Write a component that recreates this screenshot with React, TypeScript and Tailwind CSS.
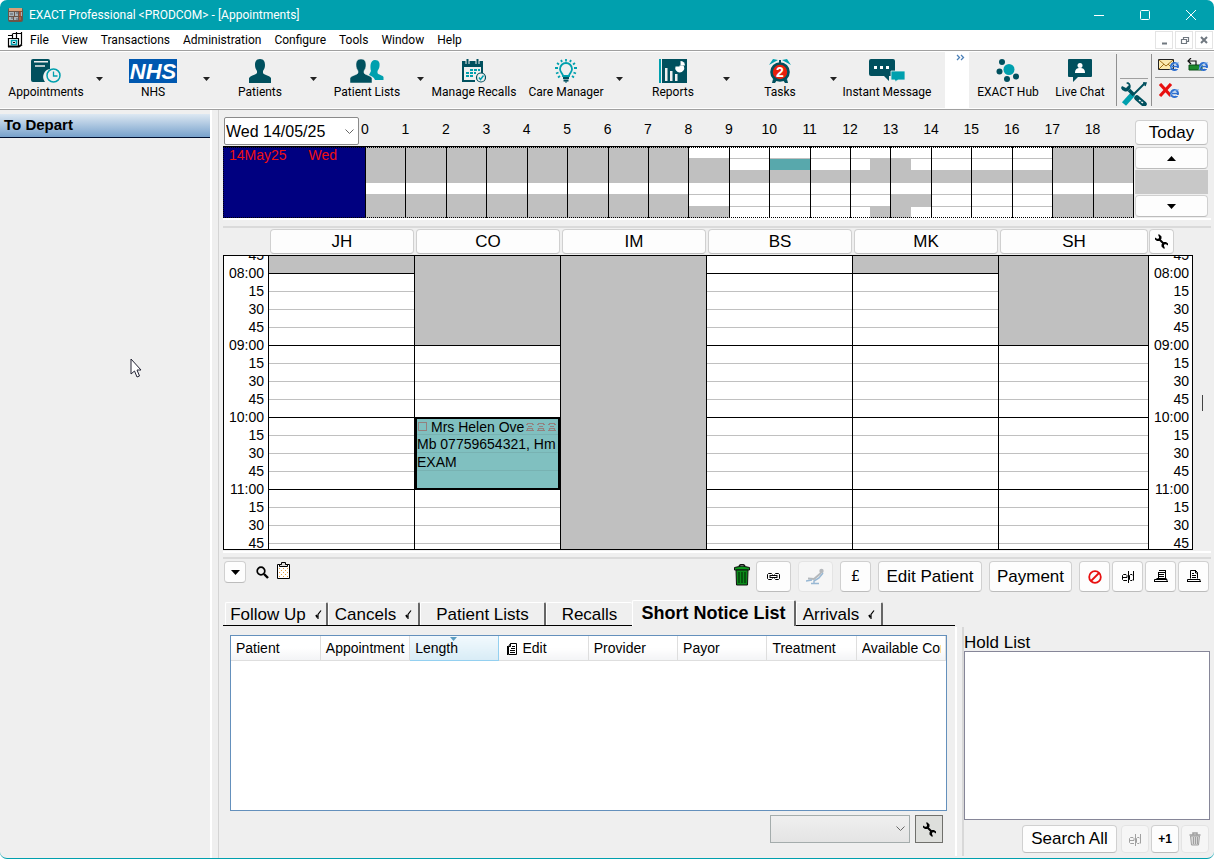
import React from "react";

const ui = "font-['Roboto','Open_Sans',sans-serif]";

const menus = ["File", "View", "Transactions", "Administration", "Configure", "Tools", "Window", "Help"];

type Seg = [number, string];

const G = "bg-[#c0c0c0]";
const W = "bg-white";
const T = "bg-[#58a8ac]";

const overview: Seg[][] = [
  [[8, G], [9, W], [2, G]],
  [[9, G], [1, W], [1, T], [1.5, W], [1, G], [3.5, W], [2, G]],
  [[19, G]],
  [[19, W]],
  [[8, G], [5, W], [1, G], [3, W], [2, G]],
  [[9, G], [3.5, W], [1, G], [3.5, W], [2, G]],
];

const hours = Array.from({ length: 19 }, (_, i) => i);

// closed = number of leading quarter-hour slots, from 07:45, with no surgery
const providers = [
  { name: "JH", closed: 1 },
  { name: "CO", closed: 5 },
  { name: "IM", closed: 99 },
  { name: "BS", closed: 0 },
  { name: "MK", closed: 1 },
  { name: "SH", closed: 5 },
];

const slots = Array.from({ length: 17 }, (_, i) => i);

function slotLabel(i: number) {
  const minutes = 7 * 60 + 45 + i * 15;
  const m = minutes % 60;
  const h = Math.floor(minutes / 60);
  return m === 0 ? `${String(h).padStart(2, "0")}:00` : String(m);
}

function AppIcon() {
  return (
    <svg width="15" height="16" viewBox="0 0 15 16" aria-hidden="true">
      <rect x="0" y="1" width="15" height="14" rx="2" fill="#6b5548" />
      <rect x="1" y="1" width="13" height="3" fill="#d9a078" />
      <path d="M1 5h5v4H1zM7 5h3v4H7zM11 5h3v4h-3zM1 10h4v3H1zM6 10h4v3H6zM11 10h2v3h-2z" fill="#a9b4ba" />
      <path d="M2 7h3M8 6h4M3 11h2M8 12h3" stroke="#5c5f66" />
      <path d="M12 4v10" stroke="#a8401c" strokeWidth="1.500" />
    </svg>
  );
}

function DocIcon() {
  return (
    <svg width="16" height="16" viewBox="0 0 16 16" fill="none" stroke="#000" strokeWidth="1.200" aria-hidden="true">
      <path d="M5.500 6V1.500M14.500 0v12M1 3.500h5M9.500 0v6M1.500 6.500v8h10v-8z" />
      <path d="M1 14.500h11l3-2" strokeWidth="1.800" />
      <path d="M4.500 8.500h5v4h-5z" stroke="#00a0ae" strokeWidth="1.600" />
      <path d="M6 10.500h2M6 1.500h8" />
    </svg>
  );
}

function AppointmentsIcon() {
  return (
    <svg width="30" height="24" viewBox="0 0 30 24" aria-hidden="true">
      <path d="M2 0h15q2 0 2 2v8a8 8 0 0 0-5 13H2q-2 0-2-2V2Q0 0 2 0z" fill="#00505e" />
      <path d="M3 2h14v1.500H3z" fill="#efefef" />
      <path d="M4 7h10" stroke="#efefef" strokeWidth="1.500" />
      <circle cx="22.500" cy="16.500" r="6.500" fill="#efefef" stroke="#00a0ae" strokeWidth="1.500" />
      <path d="M22.500 12.500v4.500h4" fill="none" stroke="#00a0ae" strokeWidth="1.300" />
    </svg>
  );
}

const person = "M11 0c4 0 5 3 5 6 0 3-1 4-2 6v2c1 2 6 2 8 5v5H0v-5c2-3 7-3 8-5v-2C7 10 6 9 6 6c0-3 1-6 5-6z";

function PatientIcon() {
  return (
    <svg width="22" height="24" viewBox="0 0 22 24" aria-hidden="true">
      <path d={person} fill="#00505e" />
    </svg>
  );
}

function PatientListsIcon() {
  return (
    <svg width="34" height="24" viewBox="0 0 34 24" aria-hidden="true">
      <path d="M25 1c4 0 5 3 4.500 6 0 2-1 3-2 5v2c1 2 5 2 6 4v3H25c-1-3-4-4-6-5l2-4c-1-4-1-11 4-11z" fill="#00a0ae" />
      <path d={person} fill="#00505e" stroke="#efefef" strokeWidth="0.500" />
    </svg>
  );
}

function RecallsIcon() {
  return (
    <svg width="24" height="24" viewBox="0 0 24 24" aria-hidden="true">
      <path d="M0 2h21v12h-2V8H2v13h11v2H0z" fill="#00505e" />
      <path d="M5.500 0v5M15.500 0v5" stroke="#efefef" strokeWidth="4" />
      <path d="M5.500 0v5M15.500 0v5" stroke="#00505e" strokeWidth="2" />
      <path d="M8 10h3v2H8zM12 10h3v2h-3zM16 10h2v2h-2zM4 13h3v2H4zM8 13h3v2H8zM12 13h2v2h-2zM4 16h3v2H4zM8 16h3v2H8z" fill="#00a0ae" />
      <circle cx="19" cy="18.500" r="4.500" fill="#efefef" stroke="#00505e" strokeWidth="1.200" />
      <path d="M17 18.500l1.500 2 3-4" fill="none" stroke="#00a0ae" strokeWidth="1.500" />
    </svg>
  );
}

function CareIcon() {
  return (
    <svg width="22" height="24" viewBox="0 0 22 24" fill="none" aria-hidden="true">
      <path d="M8 17c0-3-3-3-3-7a6 6 0 0 1 12 0c0 4-3 4-3 7z" stroke="#00a0ae" strokeWidth="1.800" />
      <path d="M11 0v2.500M6 1l1 2M16 1l-1 2M2 4l2 1.500M20 4l-2 1.500M0 9h3M19 9h3M1 14.500l2.500-1M21 14.500l-2.500-1M3 18.500l2-1.500M19 18.500l-2-1.500" stroke="#00a0ae" strokeWidth="1.800" />
      <path d="M8 19h6M8.500 21.500h5" stroke="#00505e" strokeWidth="1.800" />
      <path d="M9.500 22.500h3L11 24z" fill="#00505e" />
    </svg>
  );
}

function ReportsIcon() {
  return (
    <svg width="28" height="24" viewBox="0 0 28 24" aria-hidden="true">
      <path d="M0 0h2v24H0z" fill="#00a0ae" />
      <path d="M3 0h25v24H3z" fill="#00505e" />
      <path d="M6 9h2.500v13H6zM11 12h2.500v10H11zM16 15h2.500v7H16z" fill="#efefef" />
      <path d="M20.500 3v4.500H16.500a4.500 4.500 0 1 0 8.500 0l-1-1h-3.500z" fill="#fff" />
      <path d="M21.500 2v4.500h4.500a4.500 4.500 0 0 0-4.500-4.500z" fill="#fff" />
    </svg>
  );
}

function TasksIcon() {
  return (
    <svg width="24" height="24" viewBox="0 0 24 24" aria-hidden="true">
      <path d="M1 6l4-6 5 1zM23 6l-4-6-5 1z" fill="#00a0ae" />
      <path d="M11 1h2v3h-2z" fill="#00505e" />
      <path d="M5 20l-1 4h3l2-3zM19 20l1 4h-3l-2-3z" fill="#00505e" />
      <circle cx="12" cy="13" r="8.500" fill="#e8200c" stroke="#00505e" strokeWidth="2.600" />
      <text x="12" y="18" textAnchor="middle" fontFamily="Liberation Sans" fontWeight="bold" fontSize="14" fill="#fff">2</text>
    </svg>
  );
}

function MessageIcon() {
  return (
    <svg width="36" height="23" viewBox="0 0 36 23" aria-hidden="true">
      <path d="M2 0h22q2 0 2 2v13q0 2-2 2h-4v5l-5-5H2q-2 0-2-2V2Q0 0 2 0z" fill="#00505e" />
      <path d="M5 7h3v3H5zM11 7h3v3h-3zM17 7h3v3h-3z" fill="#fff" />
      <path d="M22 12h14v9h-7l-3 2v-2h-4z" fill="#00a0ae" stroke="#efefef" strokeWidth="0.800" />
    </svg>
  );
}

function HubIcon() {
  return (
    <svg width="24" height="24" viewBox="0 0 24 24" fill="#00505e" aria-hidden="true">
      <circle cx="13" cy="10.500" r="5.500" fill="#00a0ae" />
      <circle cx="6" cy="3" r="3" />
      <circle cx="3.500" cy="12.500" r="3" />
      <circle cx="11" cy="20" r="3" />
      <circle cx="20" cy="17.500" r="3" />
    </svg>
  );
}

function ChatIcon() {
  return (
    <svg width="24" height="23" viewBox="0 0 24 23" aria-hidden="true">
      <path d="M1 0h22q1 0 1 1v16q0 1-1 1H10l-5 5v-5H1q-1 0-1-1V1q0-1 1-1z" fill="#00505e" />
      <circle cx="12" cy="6.500" r="2.500" fill="#fff" />
      <path d="M7 14c0-4 2-5 5-5s5 1 5 5z" fill="#fff" />
    </svg>
  );
}

function ToolsIcon() {
  return (
    <svg width="26" height="24" viewBox="0 0 26 24" fill="none" aria-hidden="true">
      <path d="M24 1L12 13" stroke="#00505e" strokeWidth="2" />
      <path d="M22 1h3l-1 3" stroke="#00505e" strokeWidth="1.500" />
      <path d="M12 12L3 22" stroke="#00a0ae" strokeWidth="5.500" />
      <path d="M8 8l5 5" stroke="#00505e" strokeWidth="3.500" />
      <path d="M16 16l7 6" stroke="#00505e" strokeWidth="5.500" strokeLinecap="round" />
      <path d="M18 18l4 3" stroke="#efefef" strokeWidth="1.500" strokeDasharray="2 1" />
      <path d="M7 0a5 5 0 1 1-7 6l1-2 4 2 3-3-3-2z" fill="#00505e" />
    </svg>
  );
}

function IeMark({ x, y }: { x: number; y: number }) {
  return (
    <g transform={`translate(${x} ${y})`} fill="none">
      <circle cx="4.500" cy="4.500" r="3.500" stroke="#2f6fd0" strokeWidth="2" />
      <path d="M1.500 4.500h7" stroke="#2f6fd0" strokeWidth="1.500" />
      <path d="M6 6.500h4" stroke="#efefef" />
      <path d="M0 8C1 3 6 0 9 1" stroke="#7fb4ee" />
    </g>
  );
}

function MailIcon() {
  return (
    <svg width="22" height="14" viewBox="0 0 22 14" aria-hidden="true">
      <path d="M.500 1.500h15v10H.500z" fill="#fbeab0" stroke="#222" />
      <path d="M1 2l7 6 7-6M1 11l5-5M15 11l-5-5" fill="none" stroke="#a07018" />
      <IeMark x={12} y={4} />
    </svg>
  );
}

function SyncIcon() {
  return (
    <svg width="22" height="14" viewBox="0 0 22 14" aria-hidden="true">
      <path d="M2 7h13v5H2z" fill="#1d8a2c" stroke="#0c4f18" />
      <path d="M4 0L1 3l3 3M1 3h8v4" fill="none" stroke="#111" strokeWidth="1.200" />
      <IeMark x={12} y={4} />
    </svg>
  );
}

function CancelIcon() {
  return (
    <svg width="22" height="16" viewBox="0 0 22 16" aria-hidden="true">
      <path d="M2 1l11 12M13 1L2 13" stroke="#e81010" strokeWidth="3.200" />
      <IeMark x={12} y={6} />
    </svg>
  );
}

function WrenchIcon() {
  return (
    <svg width="15" height="15" viewBox="0 0 15 15" aria-hidden="true">
      <path d="M5 5l5 5" stroke="#000" strokeWidth="2" />
      <path d="M4 0.500h1.500l2 2v2l-1 1.500-1.500 1H3L1 5.500V3.500l2 1.200h1.200l.800-.800V3z" />
      <path d="M11 14.500H9.500l-2-2v-2l1-1.500 1.500-1h2l2 1.500v2l-2-1.200h-1.200l-.800.800V12z" />
    </svg>
  );
}

function TrashIcon({ muted = false }: { muted?: boolean }) {
  if (muted) {
    return (
      <svg width="12" height="14" viewBox="0 0 12 14" fill="none" stroke="#a0a0a0" aria-hidden="true">
        <path d="M.500 3h11M4 3V1h4v2" strokeWidth="1.500" />
        <path d="M1.500 4l1 9h7l1-9z" fill="#d8d8d8" />
        <path d="M4.500 5v7M6.500 5v7M8.500 5v7" />
      </svg>
    );
  }
  return (
    <svg width="16" height="22" viewBox="0 0 16 22" aria-hidden="true">
      <path d="M5 2q3-3 6 0" fill="none" stroke="#111" strokeWidth="1.500" />
      <path d="M.500 3.500q7.500-3 15 0V6H.500z" fill="#0a9a1c" stroke="#111" />
      <path d="M2 6h12l-.500 15h-11z" fill="#0a8a1a" stroke="#111" />
      <path d="M5 8v11M8 8v11M11 8v11" stroke="#033d0a" strokeWidth="1.400" />
    </svg>
  );
}

function LinkIcon() {
  return (
    <svg width="13" height="8" viewBox="0 0 13 8" fill="none" stroke="#000" aria-hidden="true">
      <path d="M5.500 1.500l-1-1h-3l-1 1v4l1 1h3l1-1M7.500 1.500l1-1h3l1 1v4l-1 1h-3l-1-1M3 2.500h7M3 4.500h7M3 2v3M10 2v3" />
    </svg>
  );
}

function ChairIcon() {
  return (
    <svg width="20" height="17" viewBox="0 0 20 17" fill="none" aria-hidden="true">
      <path d="M2 10.500l6 .500 7-6" stroke="#b4b8bc" strokeWidth="2" />
      <circle cx="15.500" cy="3" r="2.200" fill="#b4b8bc" />
      <path d="M17 5l-4 5-5 3v2M0 13l6-1M5 15.500h8" stroke="#98b8d4" strokeWidth="1.500" />
    </svg>
  );
}

function BlockIcon() {
  return (
    <svg width="14" height="14" viewBox="0 0 14 14" fill="none" stroke="#e81010" strokeWidth="1.800" aria-hidden="true">
      <circle cx="7" cy="7" r="5.800" />
      <path d="M11 3l-8 8" />
    </svg>
  );
}

function EditMark({ muted = false }: { muted?: boolean }) {
  return (
    <svg width="12" height="13" viewBox="0 0 12 13" fill="none" stroke={muted ? "#a0a0a0" : "#000"} aria-hidden="true">
      <path d="M.500 7.500h4.500v-2l-1-1H1.500l-1 1v4l1 1H5M6.500 1v12M11.500 1v9.500M11 5.500l-1-1H8.500l-1 1v4l1 1H10l1-1" />
    </svg>
  );
}

function PrintIcon({ stacked = false }: { stacked?: boolean }) {
  return (
    <svg width="14" height="13" viewBox="0 0 14 13" fill="none" stroke="#000" aria-hidden="true">
      {stacked ? (
        <path d="M5 .500h7M4 2.500h7.500M11.500 1v7M4.500 3v5M2.500 8.500h10M5 4.500h5M5 6.500h5" />
      ) : (
        <path d="M3.500 8.500v-8h5l2 2v6M8.500 0v3h2M5 3.500h2M5 5.500h4M5 7.500h4" />
      )}
      <path d="M.500 12V9.500h3M10 9.500h3V12M3 9.500h8" />
      <path d="M0 11.500h14" />
    </svg>
  );
}

function SearchIcon() {
  return (
    <svg width="13" height="13" viewBox="0 0 13 13" fill="none" stroke="#000" aria-hidden="true">
      <circle cx="5" cy="5" r="3.800" strokeWidth="1.700" />
      <path d="M8 8l4 4" strokeWidth="2.400" />
    </svg>
  );
}

function ClipboardIcon() {
  return (
    <svg width="13" height="19" viewBox="0 0 13 19" fill="none" aria-hidden="true">
      <path d="M.500 3.500h12v14H.500z" fill="#fff" stroke="#000" />
      <path d="M2 7.500h1M6 7.500h1M10 7.500h1M4 9.500h1M8 9.500h1M2 11.500h1M6 11.500h1M10 11.500h1M4 13.500h1M8 13.500h1M2 15.500h1M6 15.500h1M10 15.500h1" stroke="#e8a040" />
      <path d="M2.500 5.500v-2h2v-2h4v2h2v2z" fill="#ddd" stroke="#000" />
    </svg>
  );
}

function Triangle({ up = false }: { up?: boolean }) {
  return (
    <svg width="9" height="5" viewBox="0 0 9 5" aria-hidden="true">
      <path d={up ? "M0 5h9L4.500 0z" : "M0 0h9L4.500 5z"} />
    </svg>
  );
}

function Chevron() {
  return (
    <svg width="9" height="6" viewBox="0 0 9 6" fill="none" stroke="#666" aria-hidden="true">
      <path d="M.500.500l4 4 4-4" />
    </svg>
  );
}

function PhoneIcon() {
  return (
    <svg width="8" height="8" viewBox="0 0 8 8" fill="none" stroke="#94807e" aria-hidden="true">
      <path d="M0 1.500h2M6 1.500h2M1 .500h6M2 3.500h4M1 5.500h6M0 7.500h8M1.500 5v3M6.500 5v3" strokeWidth="1.200" />
    </svg>
  );
}

function CheckMark() {
  return (
    <svg width="7" height="10" viewBox="0 0 7 10" fill="none" stroke="#000" aria-hidden="true">
      <path d="M1 5l1.500 2.500" strokeWidth="1.800" />
      <path d="M3 9V4.500L6 .500" strokeWidth="1.200" />
    </svg>
  );
}

function Handle() {
  return (
    <svg width="7" height="4" viewBox="0 0 7 4" fill="#222" aria-hidden="true">
      <path d="M0 0h7L3.500 4z" />
    </svg>
  );
}

function Tool({ label, arrow = false, children, width = "w-[92px]" }: { label: string; arrow?: boolean; children: React.ReactNode; width?: string }) {
  return (
    <div className="flex shrink-0">
      <button type="button" className={`${width} flex flex-col items-center pt-[7px]`}>
        <span className="flex h-6 items-start">{children}</span>
        <span className="whitespace-nowrap text-[12px] leading-[18px]">{label}</span>
      </button>
      {arrow && (
        <button type="button" aria-label={`${label} menu`} className="flex w-[15px] justify-center pt-[25px]">
          <Handle />
        </button>
      )}
    </div>
  );
}

function Btn({ children, className = "", label, disabled = false }: { children: React.ReactNode; className?: string; label?: string; disabled?: boolean }) {
  return (
    <button
      type="button"
      aria-label={label}
      disabled={disabled}
      className={`flex shrink-0 items-center justify-center whitespace-nowrap rounded-[4px] border ${disabled ? "border-[#e4e4e4] bg-[#f6f6f6]" : "border-[#d0d0d0] border-b-[#bcbcbc] bg-[#fdfdfd]"} ${className}`}
    >
      {children}
    </button>
  );
}

function TimeColumn({ className }: { className: string }) {
  return (
    <div className={`w-[44px] shrink-0 overflow-hidden bg-white text-right text-[14px] ${className}`}>
      <div className="-mt-[10px]">
        {slots.map((i) => (
          <div key={i} className="h-[18px] leading-[18px]">{slotLabel(i)}</div>
        ))}
      </div>
    </div>
  );
}

function ProviderColumn({ closed, children }: { closed: number; children?: React.ReactNode }) {
  return (
    <div className="relative flex min-w-0 flex-col border-l border-black bg-white">
      {slots.map((i) => {
        const last = i === closed - 1 || i % 4 === 0;
        const tone = i < closed ? "bg-[#c0c0c0]" : "bg-white";
        const line = i < closed - 1 ? "border-[#c0c0c0]" : last ? "border-black" : "border-[#c0c0c0]";
        const size = i === slots.length - 1 ? "flex-1" : "h-[18px] shrink-0 border-b";
        return <div key={i} className={`${size} ${tone} ${line}`} />;
      })}
      {children}
    </div>
  );
}

function AppointmentCard() {
  return (
    <div className="absolute inset-x-0 top-[161px] h-[73px] overflow-hidden border-2 border-black bg-[#80c0c0] text-[14px] leading-[18px]">
      <div className="flex h-4 items-center border-b border-[#78b2b2] leading-4">
        <input type="checkbox" aria-label="Arrived" className="ml-px mr-1 size-[9px] shrink-0 appearance-none border border-[#94807e]" />
        <span className="flex-1 whitespace-nowrap">Mrs Helen Ove</span>
        <span className="flex shrink-0 gap-[3px] pr-[2px]">
          <PhoneIcon />
          <PhoneIcon />
          <PhoneIcon />
        </span>
      </div>
      <div className="h-[18px] whitespace-nowrap border-b border-[#78b2b2]">Mb 07759654321, Hm</div>
      <div className="h-[18px] border-b border-[#78b2b2]">EXAM</div>
    </div>
  );
}

function Tab({ label, checked = false, className }: { label: string; checked?: boolean; className: string }) {
  return (
    <button
      type="button"
      role="tab"
      aria-selected="false"
      className={`flex h-[23px] shrink-0 items-center justify-center gap-[9px] whitespace-nowrap rounded-t-[2px] border-l border-t border-l-white border-t-white border-r-[#666] pt-px text-[17px] leading-5 ${className}`}
    >
      {label}
      {checked && <CheckMark />}
    </button>
  );
}

const columns = ["Patient", "Appointment", "Length", "Edit", "Provider", "Payor", "Treatment", "Available Con"];

export default function App() {
  return (
    <div className="flex h-screen min-h-[700px] flex-col overflow-hidden rounded-[7px] border-b border-[#00a0ae] bg-[#efefef] font-['Liberation_Sans',sans-serif] text-black">
      <header className={`flex h-[30px] shrink-0 items-center bg-[#00a0ae] pl-2 text-[12px] text-white ${ui}`}>
        <AppIcon />
        <h1 className="ml-[6px]">EXACT Professional &lt;PRODCOM&gt; - [Appointments]</h1>
        <div className="ml-auto flex">
          <button type="button" aria-label="Minimise" className="flex w-[46px] items-center justify-center">
            <svg width="10" height="10" stroke="white"><path d="M0 5.500h10" /></svg>
          </button>
          <button type="button" aria-label="Maximise" className="flex w-[46px] items-center justify-center">
            <svg width="10" height="10" stroke="white" fill="none"><rect x=".5" y=".5" width="9" height="9" rx="1" /></svg>
          </button>
          <button type="button" aria-label="Close" className="flex w-[46px] items-center justify-center">
            <svg width="10" height="10" stroke="white"><path d="M0 0l10 10M10 0L0 10" /></svg>
          </button>
        </div>
      </header>

      <nav className={`flex h-5 shrink-0 items-center bg-white pl-[7px] text-[12px] ${ui}`}>
        <DocIcon />
        <div className="ml-[7px] flex gap-[13px]">
          {menus.map((m) => (
            <button type="button" key={m}>{m}</button>
          ))}
        </div>
        <div className="ml-auto flex gap-[2px] pr-px">
          {["M4 9.500h5", "M5.500 5.500V3.500h5v4h-2M3.500 5.500h5v4h-5z", "M3 3l6 6M9 3l-6 6"].map((d, i) => (
            <button type="button" key={d} aria-label={["Minimise window", "Restore window", "Close window"][i]} className="flex size-[18px] items-center justify-center border border-[#e4e4e4]">
              <svg width="13" height="13" fill="none" stroke="#707880" strokeWidth={i === 1 ? 1.2 : 2}><path d={d} /></svg>
            </button>
          ))}
        </div>
      </nav>

      <div className={`flex h-[60px] shrink-0 border-y border-[#a0a0a0] ${ui}`}>
        <div className="flex w-full border-y border-white">
          <Tool label="Appointments" arrow><AppointmentsIcon /></Tool>
          <Tool label="NHS" arrow>
            <span className="flex h-6 w-12 items-center justify-center bg-[#0058b0] font-['Liberation_Sans',sans-serif] text-[22px] font-bold italic text-white">NHS</span>
          </Tool>
          <Tool label="Patients" arrow><PatientIcon /></Tool>
          <Tool label="Patient Lists" arrow><PatientListsIcon /></Tool>
          <Tool label="Manage Recalls"><RecallsIcon /></Tool>
          <Tool label="Care Manager" arrow><CareIcon /></Tool>
          <Tool label="Reports" arrow><ReportsIcon /></Tool>
          <Tool label="Tasks" arrow><TasksIcon /></Tool>
          <Tool label="Instant Message"><MessageIcon /></Tool>
          <div className="ml-auto flex shrink-0">
            <button type="button" aria-label="More tools" className="mr-[3px] flex w-6 justify-center bg-white pt-[2px]">
              <svg width="9" height="7" fill="none" stroke="#4c80b8" strokeWidth="1.300" className="ml-[7px]"><path d="M1 1l2.500 2.500L1 6M5 1l2.500 2.500L5 6" /></svg>
            </button>
            <Tool label="EXACT Hub" width="w-[72px]"><HubIcon /></Tool>
            <Tool label="Live Chat" width="w-[72px]"><ChatIcon /></Tool>
            <div className="my-[2px] w-[36px] border-x border-[#909090] px-[3px]">
              <div className="h-[25px] border-b border-[#a0a0a0]" />
              <button type="button" aria-label="Tools" className="flex h-[27px] w-full items-end justify-center"><ToolsIcon /></button>
            </div>
            <div className="w-[62px] pl-[3px]">
              <div className="flex h-[26px] items-center justify-center gap-[7px] border-b border-[#a0a0a0] pr-[2px]">
                <button type="button" aria-label="Send mail"><MailIcon /></button>
                <button type="button" aria-label="Synchronise"><SyncIcon /></button>
              </div>
              <button type="button" aria-label="Stop" className="ml-[3px] mt-[5px]"><CancelIcon /></button>
            </div>
          </div>
        </div>
      </div>

      <div className="flex min-h-0 flex-1">
        <aside className="relative w-[212px] shrink-0 border-r-2 border-white pt-1">
          <h2 className="h-6 border-b border-[#001030] bg-linear-to-b from-[#dde8f2] to-[#78a2cc] pl-1 text-[15px] font-bold leading-[21px]">To Depart</h2>
          <svg width="12" height="20" viewBox="0 0 12 20" className="absolute left-[130px] top-[248px]" aria-hidden="true">
            <path d="M1 1v15l3.500-3 2.500 6 2.500-1-2.500-6H11z" fill="#fff" stroke="#223" />
          </svg>
        </aside>

        <main className="ml-[6px] flex min-w-0 flex-1 flex-col border-l border-[#d4d4d4]">
          <section className="flex shrink-0 pl-1 pr-[6px] pt-[7px]">
            <div className="min-w-0 flex-1">
              <div className="flex h-[29px]">
                <div className="relative w-[142px] shrink-0 pl-px">
                  <select aria-label="Date" className="h-7 w-[135px] appearance-none rounded-[2px] border border-[#8a8a8a] bg-white pl-px pt-px text-[16px]">
                    <option>Wed 14/05/25</option>
                  </select>
                  <span className="pointer-events-none absolute right-[11px] top-[12px]"><Chevron /></span>
                </div>
                <div className="mr-px flex flex-1">
                  {hours.map((h) => (
                    <div key={h} className="flex-1">
                      <span className="flex w-0 justify-center pt-1 text-[14px] leading-4">{h}</span>
                    </div>
                  ))}
                </div>
              </div>
              <div className="relative flex h-[72px] border-t border-black">
                <div className="w-[142px] shrink-0 bg-[#000080] pl-[6px] text-[14px] leading-[17px] text-[#f01010]">
                  <span className="mr-[22px]">14May25</span>
                  <span>Wed</span>
                </div>
                <div className="relative flex-1 border-r border-black">
                  {overview.map((row, r) => (
                    <div key={r} className={`flex border-[#c0c0c0] bg-[#c0c0c0] ${r === 5 ? "h-[11px]" : "h-3 border-b"}`}>
                      {row.map(([n, tone], s) => (
                        <div key={s} className={`basis-0 ${tone}`} style={{ flexGrow: n }} />
                      ))}
                    </div>
                  ))}
                  <div className="absolute inset-0 flex">
                    {hours.map((h) => (
                      <div key={h} className="flex-1 border-l border-black" />
                    ))}
                  </div>
                </div>
                <div className="pointer-events-none absolute inset-0 border border-dotted border-black" />
              </div>
            </div>
            <div className="ml-px flex w-[73px] shrink-0 flex-col pt-[3px] text-[17px]">
              <Btn className="h-[25px] w-full">Today</Btn>
              <Btn label="Previous week" className="mt-[2px] h-[22px] w-full"><Triangle up /></Btn>
              <div className="my-px h-6 bg-[#c8c8c8]" />
              <Btn label="Next week" className="h-[22px] w-full"><Triangle /></Btn>
            </div>
          </section>

          <div className="ml-1 mr-[3px] h-[10px] shrink-0 border-y-2 border-b-[#dadada] border-t-white" />

          <section className="relative flex min-h-0 flex-1 flex-col pl-1 pr-[21px] pt-px">
            <div className="flex h-[26px] shrink-0 pl-[46px]">
              <div className="grid flex-1 grid-cols-[repeat(5,146fr)_150fr]">
                {providers.map((p) => (
                  <div key={p.name} className="px-px">
                    <Btn className="h-[25px] w-full text-[17px]">{p.name}</Btn>
                  </div>
                ))}
              </div>
              <div className="w-[44px] shrink-0">
                <Btn label="Book settings" className="h-[25px] w-[25px]"><WrenchIcon /></Btn>
              </div>
            </div>
            <div className="flex min-h-0 flex-1 overflow-hidden border border-black">
              <TimeColumn className="pr-1" />
              <div className="grid flex-1 grid-cols-[repeat(5,146fr)_150fr]">
                {providers.map((p) => (
                  <ProviderColumn key={p.name} closed={p.closed}>
                    {p.name === "CO" && <AppointmentCard />}
                  </ProviderColumn>
                ))}
              </div>
              <TimeColumn className="border-l border-black pr-[3px]" />
            </div>
            <div className="absolute right-[11px] top-[52%] h-4 w-px bg-[#444]" />
          </section>

          <div className="ml-1 mr-[3px] mt-px h-2 shrink-0 border-y-2 border-b-[#dadada] border-t-white" />

          <section className="flex h-[41px] shrink-0 items-start pl-[5px] pr-[5px] pt-[2px] text-[17px]">
            <Btn label="Options" className="h-[22px] w-[22px]"><Triangle /></Btn>
            <button type="button" aria-label="Search" className="ml-[10px] mt-[5px]"><SearchIcon /></button>
            <button type="button" aria-label="Clipboard" className="ml-2"><ClipboardIcon /></button>
            <div className="ml-auto flex items-start">
              <button type="button" aria-label="Delete" className="mr-[6px] mt-[3px]"><TrashIcon /></button>
              <Btn label="Link" className="mr-[7px] h-[31px] w-[35px]"><LinkIcon /></Btn>
              <Btn label="Chair" disabled className="mr-[7px] h-[31px] w-[35px]"><ChairIcon /></Btn>
              <Btn className="mr-[7px] h-[31px] w-[31px] font-['DejaVu_Serif',serif] text-[14px]">£</Btn>
              <Btn className="mr-[7px] h-[31px] w-[104px]">Edit Patient</Btn>
              <Btn className="mr-[7px] h-[31px] w-[83px]">Payment</Btn>
              <Btn label="Block" className="mr-[2px] h-[31px] w-[31px]"><BlockIcon /></Btn>
              <Btn label="Rename" className="mr-[2px] h-[31px] w-[31px]"><EditMark /></Btn>
              <Btn label="Print all" className="mr-[2px] h-[31px] w-[31px]"><PrintIcon stacked /></Btn>
              <Btn label="Print" className="h-[31px] w-[31px]"><PrintIcon /></Btn>
            </div>
          </section>

          <section className="flex shrink-0 pl-1 pr-1">
            <div className="min-w-0 flex-1">
              <div role="tablist" className="flex h-[26px] items-end">
                <div className="flex h-[26px] items-end border-b border-black pl-[2px]">
                  <Tab label="Follow Up" checked className="w-[103px] border-r-2" />
                  <Tab label="Cancels" checked className="w-[92px] border-r-2" />
                  <Tab label="Patient Lists" className="w-[126px] border-r-2" />
                  <Tab label="Recalls" className="w-[86px]" />
                </div>
                <button type="button" role="tab" aria-selected="true" className="flex h-[26px] w-[164px] shrink-0 justify-center whitespace-nowrap rounded-t-[2px] border-l border-t border-r-2 border-l-white border-t-white border-r-[#666] text-[18px] font-bold leading-6">
                  Short Notice List
                </button>
                <div className="flex h-[26px] flex-1 items-end border-b border-black">
                  <Tab label="Arrivals" checked className="w-[87px] border-r-2" />
                </div>
              </div>
              <div className="pl-[7px] pr-[8px] pt-[9px]">
                <div className="h-44 overflow-hidden border border-[#6490bc] bg-white">
                  <table className="w-full table-fixed border-collapse text-[14px]">
                    <thead>
                      <tr>
                        {columns.map((c) => (
                          <th
                            key={c}
                            scope="col"
                            className={`relative h-6 overflow-hidden whitespace-nowrap border-b p-0 pl-[5px] pt-[2px] text-left font-normal ${c === "Length" ? "border border-[#94d0f0] border-t-0 bg-linear-to-b from-[#f2f9fd] to-[#d8ecf6]" : "border-r border-[#dedede] bg-linear-to-b from-white from-50% to-[#f3f4f6]"}`}
                          >
                            {c === "Length" && (
                              <svg width="7" height="4" className="absolute left-10 top-px" fill="#5c9cc0" aria-hidden="true"><path d="M0 0h7L3.500 4z" /></svg>
                            )}
                            <span className={`flex items-center ${c === "Available Con" ? "mr-1 overflow-hidden" : ""}`}>
                              {c === "Edit" && (
                                <svg width="10" height="12" fill="none" stroke="#000" className="ml-[3px] mr-[5px]" aria-hidden="true"><path d="M3.500.500h6v11h-8v-8zM3.500.500v3h-2M4 5.500h4M3 7.500h5M3 9.500h5M5 3.500h3M.500 3v9" /></svg>
                              )}
                              {c}
                            </span>
                          </th>
                        ))}
                      </tr>
                    </thead>
                    <tbody />
                  </table>
                </div>
                <div className="mt-1 flex justify-end gap-[5px] pr-1">
                  <div className="relative">
                    <select aria-label="List filter" className="h-7 w-[140px] appearance-none border border-[#a4acac] bg-linear-to-b from-[#efefef] to-[#e4e4e4]" />
                    <span className="pointer-events-none absolute right-[5px] top-[11px]"><Chevron /></span>
                  </div>
                  <button type="button" aria-label="List settings" className="flex size-7 items-center justify-center border border-[#70706c] bg-[#dedfdc]"><WrenchIcon /></button>
                </div>
              </div>
            </div>
            <div className="mb-[2px] mt-[27px] w-[9px] shrink-0 border-l-2 border-r-2 border-l-white border-r-[#d8d8d8]" />
            <div className="w-[246px] shrink-0 pb-[5px] pt-[32px]">
              <label htmlFor="hold" className="block h-[19px] text-[17px] leading-[22px]">Hold List</label>
              <textarea id="hold" readOnly className="block h-[169px] w-full resize-none border border-[#868698] bg-white" />
              <div className="mt-[5px] flex justify-end gap-[2px] pr-px text-[17px]">
                <Btn className="mr-[2px] h-7 w-[95px]">Search All</Btn>
                <Btn label="Rename hold" disabled className="h-7 w-7"><EditMark muted /></Btn>
                <Btn className="h-7 w-7 text-[12px] font-bold">+1</Btn>
                <Btn label="Remove hold" disabled className="h-7 w-7"><TrashIcon muted /></Btn>
              </div>
            </div>
          </section>
        </main>
      </div>
    </div>
  );
}
